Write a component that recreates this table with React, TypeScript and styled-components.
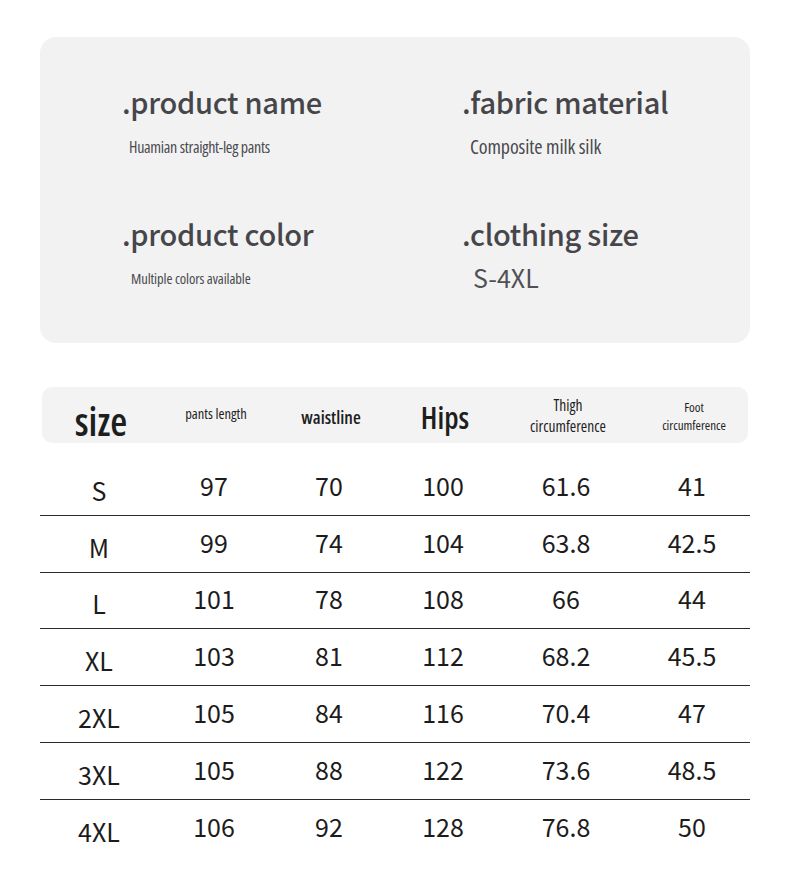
import styled, { createGlobalStyle } from 'styled-components';

const Global = createGlobalStyle`
body {
  margin: 0;
  background: #ffffff;
  font-family: "Open Sans", "Liberation Sans", sans-serif;
}
`;

const Page = styled.div`
width: 790px;
height: 885px;
padding: 37px 40px 0;
box-sizing: border-box;
`;

const InfoCard = styled.div`
height: 306px;
box-sizing: border-box;
background: #f2f2f2;
border-radius: 16px;
padding: 46px 0 0 82px;
display: grid;
grid-template-columns: 340px 1fr;
grid-auto-rows: 132px;
`;

const InfoItem = styled.div`
display: flex;
flex-direction: column;
`;

const InfoTitle = styled.div`
font-family: "Noto Sans CJK SC", "Noto Sans", sans-serif;
font-weight: 500;
font-size: 29px;
line-height: 36px;
letter-spacing: -0.3px;
color: #46464a;
`;

const InfoValue = styled.div<{ $size: number; $indent: number; $spacing?: number; $plain?: boolean }>`
margin-top: ${ p => p.$plain ? 12 : 14 }px;
padding-left: ${ p => p.$indent }px;
font-family: ${ p => p.$plain ? '"Noto Sans CJK SC", "Noto Sans", sans-serif' : '"Open Sans", sans-serif' };
font-stretch: ${ p => p.$plain ? '100%' : '75%' };
font-weight: ${ p => p.$plain ? 400 : 500 };
font-size: ${ p => p.$size }px;
letter-spacing: ${ p => p.$spacing || 0 }px;
line-height: 28px;
color: ${ p => p.$plain ? '#505055' : '#4a4a4f' };
`;

const Table = styled.div`
margin-top: 44px;
`;

const cols = '118px 112px 118px 110px 136px 116px';

const HeadRow = styled.div`
display: grid;
grid-template-columns: ${ cols };
height: 56px;
margin: 0 2px;
background: #f3f3f3;
border-radius: 10px;
`;

const HeadCell = styled.div<{ $size: number; $weight?: number; $shift?: number; $lh?: number }>`
display: flex;
align-items: center;
justify-content: center;
text-align: center;
font-stretch: 75%;
font-size: ${ p => p.$size }px;
font-weight: ${ p => p.$weight || 400 };
line-height: ${ p => p.$lh ? `${ p.$lh }px` : 1.4 };
color: #1e1e1e;
transform: translateY(${ p => p.$shift || 0 }px);
`;

const Body = styled.div`
margin-top: 16px;
`;

const Row = styled.div<{ $last?: boolean }>`
display: grid;
grid-template-columns: ${ cols };
height: 55.8px;
border-bottom: ${ p => p.$last ? 'none' : '1.5px solid #2a2a2a' };
`;

const Cell = styled.div<{ $label?: boolean }>`
display: flex;
align-items: center;
justify-content: center;
font-family: "Noto Sans CJK SC", "Noto Sans", sans-serif;
font-size: 25px;
color: #1c1c1c;
padding-top: ${ p => p.$label ? 6 : 0 }px;
padding-bottom: ${ p => p.$label ? 0 : 4 }px;
`;

const info = [
  { title: '.product name', value: 'Huamian straight-leg pants', size: 16, spacing: -0.3, indent: 7 },
  { title: '.fabric material', value: 'Composite milk silk', size: 20, spacing: -0.1, indent: 8 },
  { title: '.product color', value: 'Multiple colors available', size: 14.5, spacing: -0.1, indent: 9 },
  { title: '.clothing size', value: 'S-4XL', size: 25, indent: 11, plain: true },
];

const rows = [
  ['S', '97', '70', '100', '61.6', '41'],
  ['M', '99', '74', '104', '63.8', '42.5'],
  ['L', '101', '78', '108', '66', '44'],
  ['XL', '103', '81', '112', '68.2', '45.5'],
  ['2XL', '105', '84', '116', '70.4', '47'],
  ['3XL', '105', '88', '122', '73.6', '48.5'],
  ['4XL', '106', '92', '128', '76.8', '50'],
];

export default function App() {
  return (
    <Page>
      <Global />
      <InfoCard>
        {info.map(item => (
          <InfoItem key={item.title}>
            <InfoTitle>{item.title}</InfoTitle>
            <InfoValue
              $size={item.size}
              $indent={item.indent}
              $spacing={item.spacing}
              $plain={item.plain}
            >
              {item.value}
            </InfoValue>
          </InfoItem>
        ))}
      </InfoCard>

      <Table>
        <HeadRow>
          <HeadCell $size={39} $weight={600} $shift={6}>size</HeadCell>
          <HeadCell $size={14.5} $shift={-1}>pants length</HeadCell>
          <HeadCell $size={18} $weight={600} $shift={3}>waistline</HeadCell>
          <HeadCell $size={30} $weight={600} $shift={3}>Hips</HeadCell>
          <HeadCell $size={15.5} $shift={1} $lh={21.5}>Thigh<br />circumference</HeadCell>
          <HeadCell $size={13} $shift={1} $lh={18}>Foot<br />circumference</HeadCell>
        </HeadRow>
        <Body>
          {rows.map((r, i) => (
            <Row key={r[0]} $last={i === rows.length - 1}>
              {r.map((v, j) => (
                <Cell key={j} $label={j === 0}>{v}</Cell>
              ))}
            </Row>
          ))}
        </Body>
      </Table>
    </Page>
  );
}
